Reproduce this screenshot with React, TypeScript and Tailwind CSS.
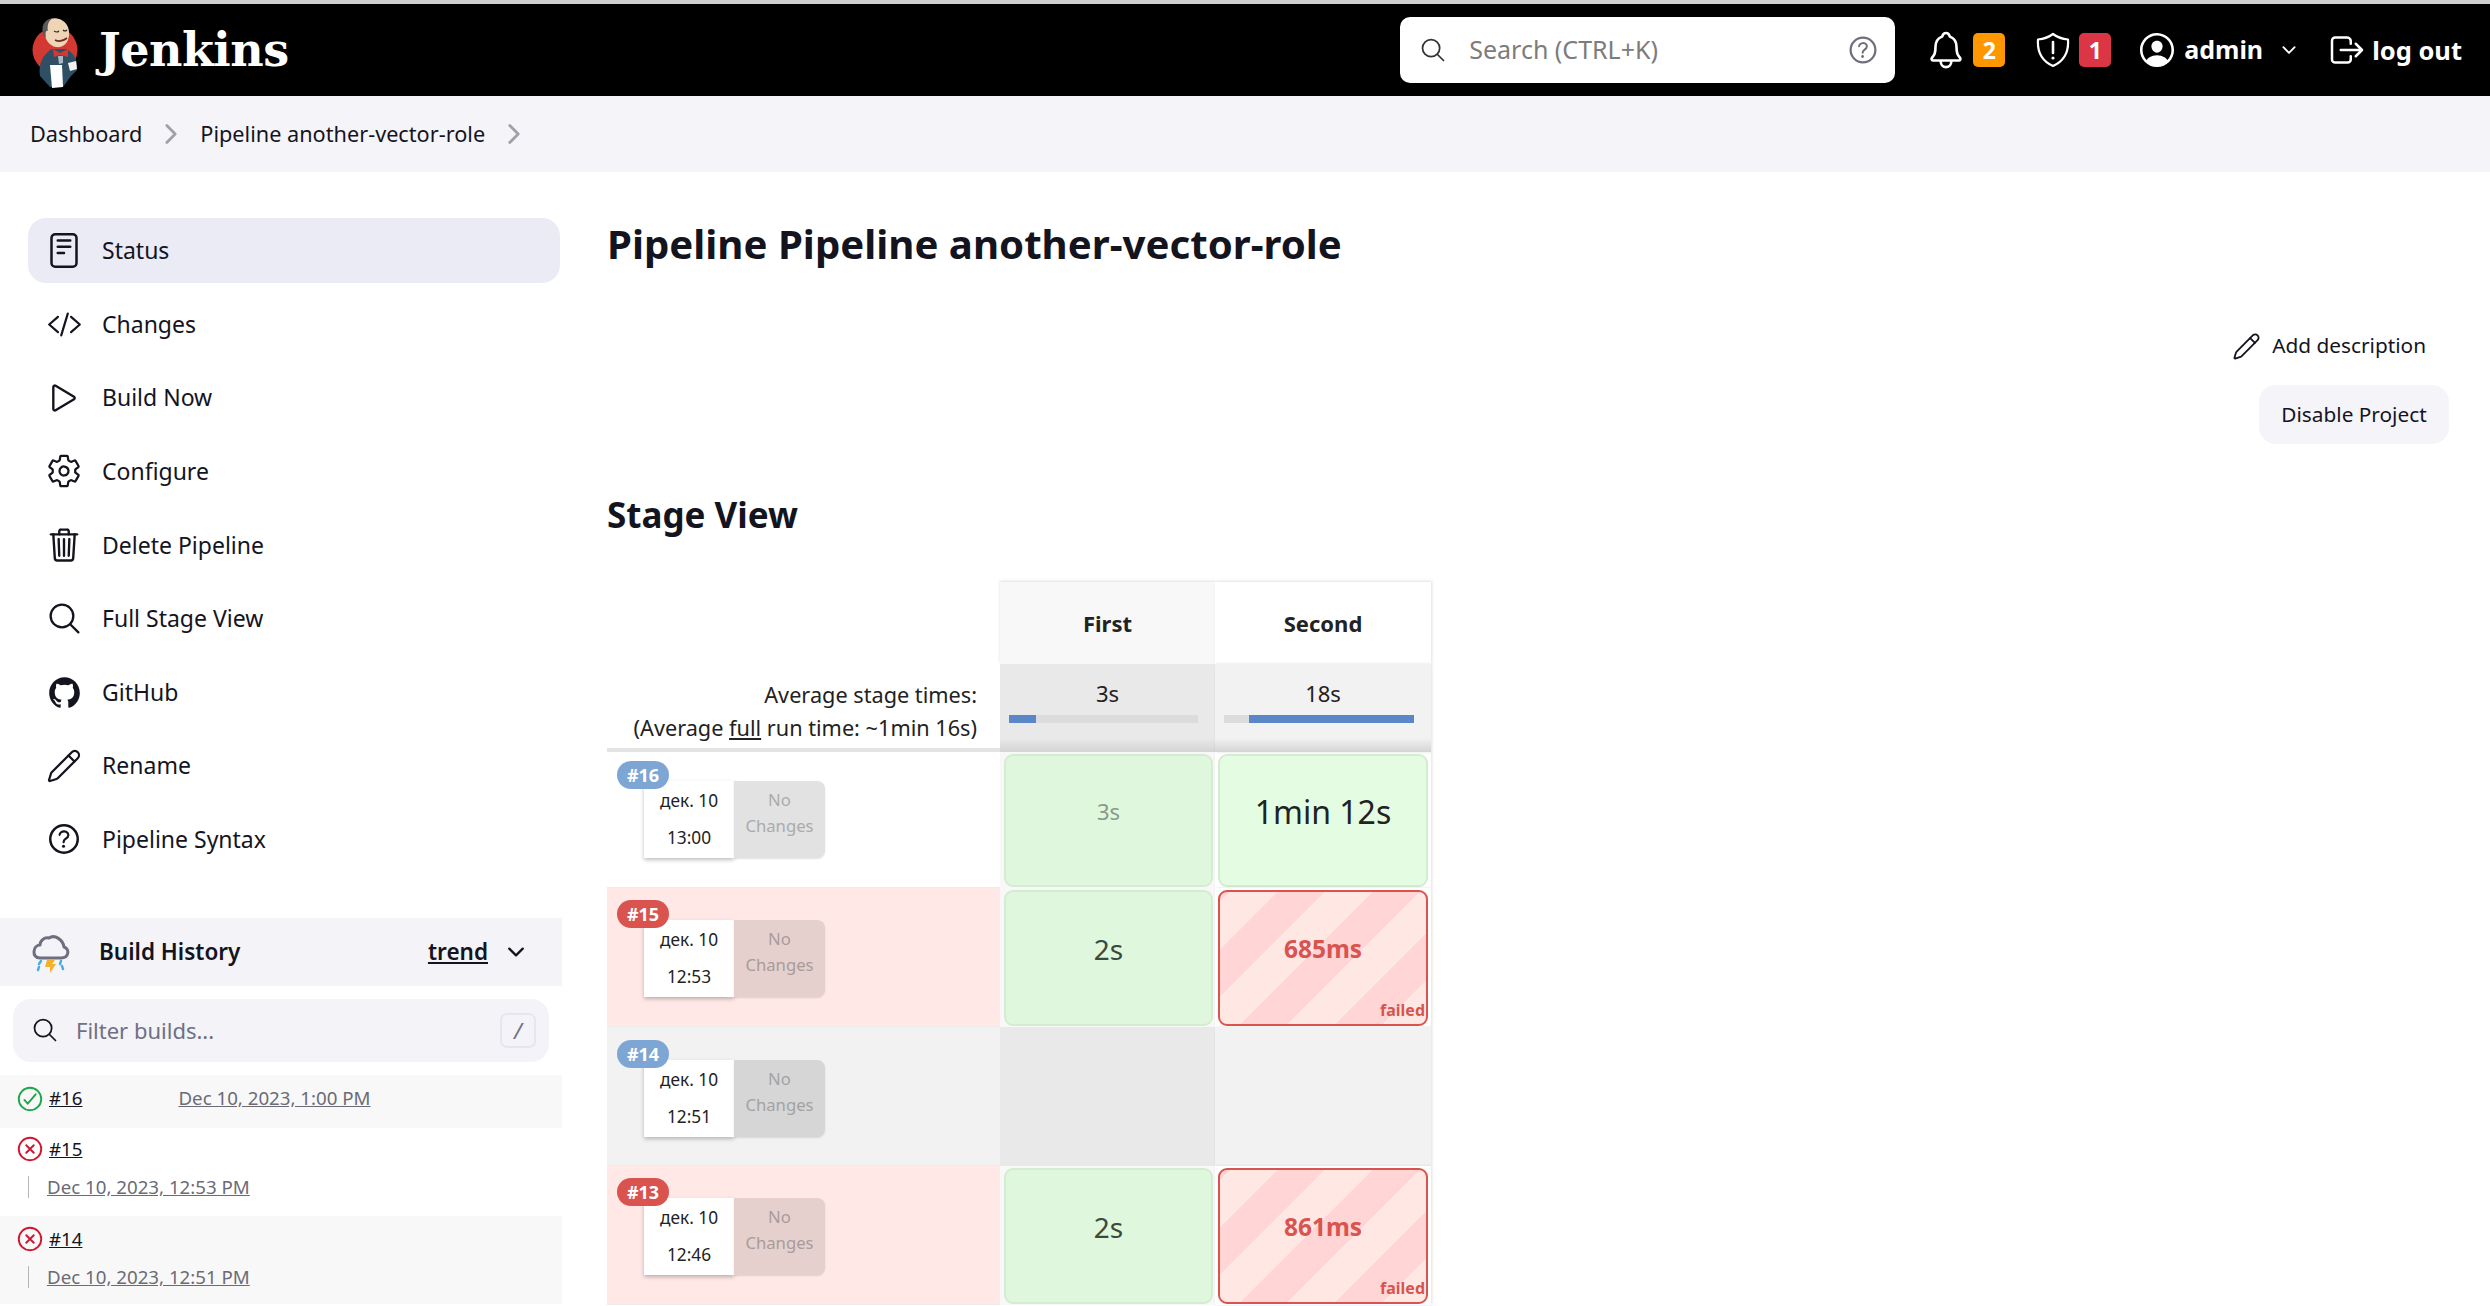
import { Pencil } from 'lucide-react';
import {
  IoChevronDown,
  IoChevronForward,
  IoCheckmarkCircleOutline,
  IoCloseCircleOutline,
  IoCodeSlashOutline,
  IoHelpCircleOutline,
  IoLogoGithub,
  IoLogOutOutline,
  IoNotificationsOutline,
  IoPersonCircleOutline,
  IoPlayOutline,
  IoReaderOutline,
  IoSearchOutline,
  IoSettingsOutline,
  IoTrashOutline,
} from 'react-icons/io5';

function PencilIcon({ className }: { className?: string }) {
  return <Pencil size="1em" strokeWidth={1.5} className={className} />;
}

const tasks = [
  { label: 'Status', icon: IoReaderOutline, size: 'text-[41px]', active: true },
  { label: 'Changes', icon: IoCodeSlashOutline, size: 'text-[35px]' },
  { label: 'Build Now', icon: IoPlayOutline, size: 'text-[38px]' },
  { label: 'Configure', icon: IoSettingsOutline, size: 'text-[36px]' },
  { label: 'Delete Pipeline', icon: IoTrashOutline, size: 'text-[38px]' },
  { label: 'Full Stage View', icon: IoSearchOutline, size: 'text-[37px]' },
  { label: 'GitHub', icon: IoLogoGithub, size: 'text-[35px]' },
  { label: 'Rename', icon: PencilIcon, size: 'text-[36px]' },
  { label: 'Pipeline Syntax', icon: IoHelpCircleOutline, size: 'text-[40px]' },
];

const stageRows = [
  { id: '#16', date: 'дек. 10', time: '13:00', kind: 'ok', first: '3s', second: '1min 12s', height: 'h-[136px]', pad: 'pt-[9px]' },
  { id: '#15', date: 'дек. 10', time: '12:53', kind: 'fail', first: '2s', second: '685ms', height: 'h-[139px]', pad: 'pt-[12px]' },
  { id: '#14', date: 'дек. 10', time: '12:51', kind: 'none', height: 'h-[139px]', pad: 'pt-[13px]' },
  { id: '#13', date: 'дек. 10', time: '12:46', kind: 'fail', first: '2s', second: '861ms', height: 'h-[139px]', pad: 'pt-[12px]' },
];

function JenkinsLogo() {
  return (
    <svg viewBox="0 0 60 76" className="w-[60px] h-[76px] shrink-0">
      <circle cx="30" cy="38" r="22.5" fill="#d33833" />
      <path d="M15 64 C13 52 18 42 27 37 L41 37 C49 41 53 48 52 58 L46 64 L38 75 L25 75 Z" fill="#2f5064" />
      <path d="M19 20 C18 10 25 5 32 6.5 C41 8 45 16 44 24 C43 32 37 36 31 35 C25 34 20 28 19 20 Z" fill="#efd4b5" />
      <path d="M19 24 C15 15 19 7 28 6 C23 9 22 14 23 19 C21 18 20 20 21 26 Z" fill="#5a5a5e" />
      <path d="M29 19 q3 2 5 0 M38 18 q2 2 4 0" stroke="#2a2a2a" strokeWidth="1.1" fill="none" />
      <path d="M30 28 q6 3 12 -2" stroke="#6b2d1f" strokeWidth="1.8" fill="none" />
      <path d="M28 37 L35 41 L43 37 L43 45 L35 43 L29 45 Z" fill="#d33833" />
      <path d="M33 44 L38 44 L38 51 L34 52 Z" fill="#a9bac4" />
      <path d="M25 53 L37 53 L38 75 L27 76 Z" fill="#fff" />
      <path d="M43 51 L51 49 L52 57 L45 59 Z" fill="#f2f2f2" />
    </svg>
  );
}

function ShieldIcon() {
  return (
    <svg viewBox="0 0 34 36" className="w-[34px] h-[36px]" fill="none" stroke="#fff" strokeWidth="2.2">
      <path d="M17 2 C21 5 26 7 32 7.5 C33 21 28 29 17 34 C6 29 1 21 2 7.5 C8 7 13 5 17 2 Z" strokeLinejoin="round" />
      <path d="M17 10 V21" strokeWidth="2.6" strokeLinecap="round" />
      <circle cx="17" cy="26" r="1.6" fill="#fff" stroke="none" />
    </svg>
  );
}

function WeatherIcon() {
  return (
    <svg viewBox="0 0 60 50" className="w-[60px] h-[50px] shrink-0" fill="none">
      <path d="M17 31 H38 C46 31 47 22 41 20 C40 13 32 7 26 11 C21 10 17 14 17 18 C10 18 8 31 17 31 Z" stroke="#6e6e7e" strokeWidth="3" strokeLinejoin="round" />
      <path d="M24 33 H32 L29 37 H33 L27 46 L27 40 H22 Z" fill="#f6b02e" />
      <path d="M18 34 L16 37 M16 40 L15 43 M38 34 L37 37 M39 39 L40 42" stroke="#45ade0" strokeWidth="2.4" strokeLinecap="round" />
    </svg>
  );
}

function Badge({ color, value }: { color: string; value: string }) {
  return (
    <span className={`flex items-center justify-center w-[32px] h-[34px] rounded-[5px] text-white text-[23px] font-bold ${color}`}>
      {value}
    </span>
  );
}

function Header() {
  return (
    <header className="h-[96px] bg-black border-t-[4px] border-[#cfcfcf] flex items-center pl-[25px] pr-[28px] text-white">
      <JenkinsLogo />
      <span className="ml-[14px] text-[46px] font-bold font-['DejaVu_Serif',serif] tracking-[-0.5px]">Jenkins</span>
      <div className="ml-auto w-[495px] h-[66px] bg-white rounded-[10px] flex items-center pl-[19px] pr-[14px] text-[#7c7c7c]">
        <IoSearchOutline className="text-[28px] text-[#333]" />
        <span className="ml-[22px] text-[25px]">Search (CTRL+K)</span>
        <IoHelpCircleOutline className="ml-auto text-[36px] text-[#6f6f7c]" />
      </div>
      <IoNotificationsOutline className="ml-[30px] text-[42px]" />
      <span className="ml-[6px]"><Badge color="bg-[#ff9800]" value="2" /></span>
      <span className="ml-[31px]"><ShieldIcon /></span>
      <span className="ml-[9px]"><Badge color="bg-[#dc3545]" value="1" /></span>
      <IoPersonCircleOutline className="ml-[25px] text-[42px]" />
      <span className="ml-[6px] text-[25px] font-bold">admin</span>
      <IoChevronDown className="ml-[16px] text-[20px]" />
      <IoLogOutOutline className="ml-[28px] text-[40px]" />
      <span className="ml-[5px] text-[25.5px] font-bold">log out</span>
    </header>
  );
}

function Breadcrumbs() {
  return (
    <nav className="h-[76px] bg-[#f4f4f9] flex items-center pl-[30px] text-[21.7px] text-[#14141f]">
      <span>Dashboard</span>
      <IoChevronForward className="mx-[14px] text-[30px] text-[#a0a0a8]" />
      <span>Pipeline another-vector-role</span>
      <IoChevronForward className="ml-[14px] text-[30px] text-[#a0a0a8]" />
    </nav>
  );
}

function Sidebar() {
  return (
    <aside className="w-[562px] shrink-0 pt-[46px]">
      <ul className="pl-[28px] pr-[2px]">
        {tasks.map((task) => (
          <li
            key={task.label}
            className={`h-[65px] mb-[8.6px] flex items-center rounded-[18px] pl-[16px] text-[23px] text-[#14141f] ${task.active ? 'bg-[#ebebf5]' : ''}`}
          >
            <span className="w-[40px] flex justify-center items-center shrink-0">
              <task.icon className={task.size} />
            </span>
            <span className="ml-[18px]">{task.label}</span>
          </li>
        ))}
      </ul>
      <div className="mt-[46px] h-[68px] bg-[#f3f3f8] flex items-center pl-[23px] pr-[34px] text-[#14141f]">
        <WeatherIcon />
        <span className="ml-[16px] text-[22.5px] font-semibold">Build History</span>
        <span className="ml-auto text-[22.5px] font-semibold underline">trend</span>
        <IoChevronDown className="ml-[16px] text-[24px]" />
      </div>
      <div className="mx-[13px] mt-[13px] h-[63px] bg-[#f3f3f8] rounded-[18px] flex items-center pl-[18px] pr-[13px]">
        <IoSearchOutline className="text-[28px] text-[#14141f]" />
        <span className="ml-[17px] text-[22px] text-[#6f6f85]">Filter builds...</span>
        <span className="ml-auto w-[36px] h-[35px] flex items-center justify-center rounded-[7px] border-2 border-[#e6e6ee] text-[22px] italic text-[#6f6f85]">/</span>
      </div>
      <div className="mt-[13px] text-[18.7px]">
        <div className="h-[53px] bg-[#f8f8f8] flex pl-[15px] pt-[9px]">
          <IoCheckmarkCircleOutline className="text-[30px] text-[#1ea64a]" />
          <span className="ml-[4px] text-[#14141f] underline">#16</span>
          <span className="ml-[96px] text-[#6b6b75] underline">Dec 10, 2023, 1:00 PM</span>
        </div>
        <BuildRow id="#15" date="Dec 10, 2023, 12:53 PM" />
        <BuildRow id="#14" date="Dec 10, 2023, 12:51 PM" shaded />
      </div>
    </aside>
  );
}

function BuildRow({ id, date, shaded }: { id: string; date: string; shaded?: boolean }) {
  return (
    <div className={`h-[88px] pl-[15px] ${shaded ? 'bg-[#f8f8f8] pt-[8px]' : 'pt-[6px]'}`}>
      <div className="flex items-center">
        <IoCloseCircleOutline className="text-[30px] text-[#d0152f]" />
        <span className="ml-[4px] text-[#14141f] underline">{id}</span>
      </div>
      <div className="flex items-center mt-[9px] ml-[13px]">
        <span className="w-[1px] h-[22px] bg-[#b5b5b5]" />
        <span className="ml-[18px] text-[#6b6b75] underline">{date}</span>
      </div>
    </div>
  );
}

function StageCell({ text, fail, large, muted, light }: { text: string; fail?: boolean; large?: boolean; muted?: boolean; light?: boolean }) {
  if (fail) {
    return (
      <div className="relative h-full pb-[18px] rounded-[9px] border-2 border-[#d9534f] flex items-center justify-center bg-[repeating-linear-gradient(135deg,#ffd5d5_0px,#ffd5d5_7px,#ffe8e4_7px,#ffe8e4_41px,#ffd5d5_41px,#ffd5d5_67px)] text-[#d9534f] text-[24.5px] font-bold">
        {text}
        <span className="absolute right-[1px] bottom-[2px] text-[16px]">failed</span>
      </div>
    );
  }
  return (
    <div
      className={`h-full pb-[18px] rounded-[9px] border-2 border-[#d5ecd3] flex items-center justify-center ${light ? 'bg-[#e4fde2]' : 'bg-[#dff7dd]'} ${large ? 'text-[32px]' : muted ? 'text-[22px]' : 'text-[28px]'} ${muted ? 'text-[#8b9a8b]' : large ? 'text-[#222]' : 'text-[#3a4a3f]'}`}
    >
      {text}
    </div>
  );
}

function StageView() {
  return (
    <div className="mt-[44px] w-[824px] text-[#222]">
      <div className="grid grid-cols-[393px_215px_216px]">
        <div />
        <div className="h-[82px] bg-[#f8f8f8] flex items-center justify-center text-[22px] font-bold shadow-[0_-1px_3px_rgba(0,0,0,0.12)]">First</div>
        <div className="h-[82px] bg-white flex items-center justify-center text-[22px] font-bold shadow-[1px_-1px_3px_rgba(0,0,0,0.12)]">Second</div>

        <div className="h-[88px] flex flex-col items-end justify-start pt-[14px] pr-[23px] text-[21.7px] leading-[33px] border-b-[4px] border-[#e4e4e4]">
          <span>Average stage times:</span>
          <span>(Average <span className="underline">full</span> run time: ~1min 16s)</span>
        </div>
        <AvgCell value="3s" shade="bg-[#e9e9e9]" start="w-[27px]" />
        <AvgCell value="18s" shade="bg-[#f2f2f2] shadow-[1px_0_3px_rgba(0,0,0,0.12)]" gap />

        {stageRows.map((row) => (
          <StageRow key={row.id} row={row} />
        ))}
      </div>
    </div>
  );
}

function AvgCell({ value, shade, start, gap }: { value: string; shade: string; start?: string; gap?: boolean }) {
  return (
    <div className={`relative h-[88px] pl-[9px] pr-[17px] pt-[16px] text-[22px] ${shade}`}>
      <div className="leading-[26px] text-center pl-[8px]">{value}</div>
      <div className="mt-[9px] h-[8px] bg-[#dcdcdc] flex">
        {gap && <div className="w-[25px]" />}
        <div className={`h-full bg-[#5b87c9] ${gap ? 'flex-1' : start}`} />
      </div>
      <div className="absolute left-0 right-0 bottom-0 h-[14px] bg-gradient-to-b from-transparent to-[#d4d4d4]" />
    </div>
  );
}

function StageRow({ row }: { row: (typeof stageRows)[number] }) {
  const fail = row.kind === 'fail';
  const none = row.kind === 'none';
  const rowBg = fail ? 'bg-[#ffe8e5]' : none ? 'bg-[#f2f2f2]' : 'bg-white';
  const badge = fail ? 'bg-[#d9534f]' : 'bg-[#7ea6d4]';
  const changes = fail ? 'bg-[#e6d0cd] text-[#a89c9a]' : none ? 'bg-[#d6d6d6] text-[#a3a3a3]' : 'bg-[#e2e2e2] text-[#ababab]';
  return (
    <>
      <div className={`${row.height} ${row.pad} pl-[10px] border-b border-[#ececec] ${rowBg}`}>
        <span className={`relative z-10 block w-[52px] h-[28px] rounded-[14px] text-white text-[18px] font-bold text-center leading-[28px] ${badge}`}>{row.id}</span>
        <div className="flex ml-[27px] -mt-[8px] h-[77px] w-[181px] text-center">
          <div className="w-[90px] bg-white shadow-[0_2px_4px_rgba(0,0,0,0.25)] flex flex-col justify-between py-[7px] text-[17.3px] text-[#222]">
            <span>{row.date}</span>
            <span>{row.time}</span>
          </div>
          <div className={`w-[91px] rounded-r-[8px] flex flex-col justify-start pt-[6px] text-[16.7px] leading-[26px] shadow-[0_1px_2px_rgba(0,0,0,0.12)] ${changes}`}>
            <span>No</span>
            <span>Changes</span>
          </div>
        </div>
      </div>
      {none ? (
        <>
          <div className={`${row.height} bg-[#e9e9e9]`} />
          <div className={`${row.height} bg-[#f2f2f2] shadow-[1px_0_3px_rgba(0,0,0,0.12)]`} />
        </>
      ) : (
        <>
          <div className={`${row.height} pl-[4px] pr-[2px] pt-[2px] pb-[1px] bg-[#f8f8f8]`}>
            <StageCell text={row.first ?? ''} muted={row.id === '#16'} />
          </div>
          <div className={`${row.height} pl-[3px] pr-[3px] pt-[2px] pb-[1px] bg-white shadow-[1px_0_3px_rgba(0,0,0,0.12)]`}>
            <StageCell text={row.second ?? ''} fail={fail} large={!fail} light />
          </div>
        </>
      )}
    </>
  );
}

export default function App() {
  return (
    <div className="h-screen overflow-hidden bg-white font-['Noto_Sans',sans-serif]">
      <Header />
      <Breadcrumbs />
      <div className="flex">
        <Sidebar />
        <main className="flex-1 pl-[45px] pr-[41px]">
          <h1 className="mt-[45px] text-[40.2px] leading-[54px] font-bold text-[#14141f]">Pipeline Pipeline another-vector-role</h1>
          <div className="mt-[59px] flex flex-col items-end text-[#14141f] text-[20.8px]">
            <div className="flex items-center mr-[23px] h-[32px]">
              <PencilIcon className="text-[29px] mr-[11px]" />
              <span>Add description</span>
            </div>
            <div className="mt-[23px] h-[59px] w-[190px] flex items-center justify-center rounded-[17px] bg-[#f4f4f9]">Disable Project</div>
          </div>
          <h2 className="mt-[48px] text-[35px] leading-[46px] font-bold text-[#14141f]">Stage View</h2>
          <StageView />
        </main>
      </div>
    </div>
  );
}
